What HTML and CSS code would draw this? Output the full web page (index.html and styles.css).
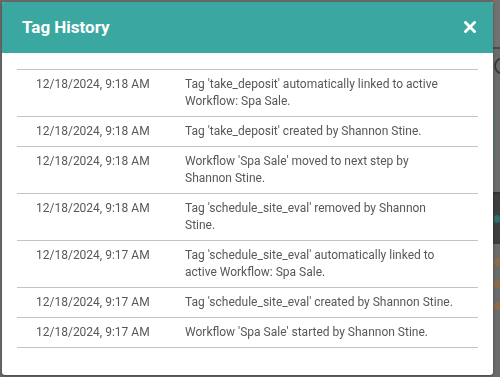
FILE: index.html
```html
<!DOCTYPE html>
<html>
<head>
<meta charset="utf-8">
<link rel="stylesheet" href="styles.css">
</head>
<body>
<div class="page">
  <div class="page-main"></div>
  <div class="page-side">
    <div class="side-top"></div>
    <div class="side-c"><span class="arc"></span></div>
    <div class="side-box"></div>
    <div class="side-gap"></div>
    <div class="side-dark"><span class="dot teal"></span></div>
    <div class="side-dots">
      <span class="dot orange"></span>
      <span class="dot orange"></span>
      <span class="dot orange"></span>
    </div>
  </div>
</div>

<div class="modal">
  <div class="modal-header">
    <h1 class="modal-title">Tag History</h1>
    <button class="close" aria-label="Close">
      <svg width="12" height="12" viewBox="0 0 12 12"><path d="M1.5 1.5 L10.5 10.5 M10.5 1.5 L1.5 10.5" stroke="#fff" stroke-width="2.8" stroke-linecap="square"/></svg>
    </button>
  </div>
  <div class="modal-body">
    <div class="history">
      <div class="row"><div class="date">12/18/2024, 9:18 AM</div><div class="desc">Tag 'take_deposit' automatically linked to active Workflow: Spa Sale.</div></div>
      <div class="row"><div class="date">12/18/2024, 9:18 AM</div><div class="desc">Tag 'take_deposit' created by Shannon Stine.</div></div>
      <div class="row"><div class="date">12/18/2024, 9:18 AM</div><div class="desc">Workflow 'Spa Sale' moved to next step by Shannon Stine.</div></div>
      <div class="row"><div class="date">12/18/2024, 9:18 AM</div><div class="desc">Tag 'schedule_site_eval' removed by Shannon Stine.</div></div>
      <div class="row"><div class="date">12/18/2024, 9:17 AM</div><div class="desc">Tag 'schedule_site_eval' automatically linked to active Workflow: Spa Sale.</div></div>
      <div class="row"><div class="date">12/18/2024, 9:17 AM</div><div class="desc">Tag 'schedule_site_eval' created by Shannon Stine.</div></div>
      <div class="row"><div class="date">12/18/2024, 9:17 AM</div><div class="desc">Workflow 'Spa Sale' started by Shannon Stine.</div></div>
    </div>
  </div>
</div>
</body>
</html>
```

FILE: styles.css
```css
html, body {
  margin: 0;
  padding: 0;
  width: 500px;
  height: 377px;
  overflow: hidden;
  background: #676767;
  font-family: Roboto, "Liberation Sans", Arial, sans-serif;
}

.page {
  display: flex;
  height: 377px;
}

.page-main {
  flex: 1;
  background: #696969;
}

.page-side {
  width: 7px;
  display: flex;
  flex-direction: column;
  background: #6b6b6b;
  overflow: hidden;
}

.side-top {
  height: 47px;
  background: #717171;
  border-bottom: 2px solid #4a4a4a;
}

.side-c {
  height: 42px;
  padding-top: 9px;
  padding-left: 1px;
}

.arc {
  display: block;
  width: 14px;
  height: 16px;
  box-sizing: border-box;
  border: 2px solid #3a3a3a;
  border-radius: 50%;
}

.side-box {
  margin-top: 10px;
  height: 44px;
  margin-left: 1px;
  border: 1px solid #4e7a76;
  border-right: none;
  border-radius: 3px 0 0 3px;
}

.side-gap {
  height: 36px;
}

.side-dark {
  height: 50px;
  background: #3e3e3e;
  border-top: 2px solid #333;
  display: flex;
  align-items: center;
  padding-left: 1px;
}

.side-dots {
  display: flex;
  flex-direction: column;
  gap: 14px;
  padding-top: 14px;
  padding-left: 1px;
}

.dot {
  display: block;
  width: 7px;
  height: 8px;
  border-radius: 4px;
}

.dot.teal { background: #2e6e6a; }
.dot.orange { background: #8a6a48; }

.modal {
  position: fixed;
  left: 2px;
  top: 2px;
  width: 491px;
  height: 373px;
  background: #fff;
  border-radius: 3px;
  overflow: hidden;
  box-shadow: 0 1px 3px rgba(0,0,0,0.35);
  display: flex;
  flex-direction: column;
}

.modal-header {
  height: 51px;
  flex: none;
  background: #3aa8a0;
  display: flex;
  align-items: center;
  justify-content: space-between;
  padding: 0 17px 0 20px;
}

.modal-title {
  margin: 0;
  font-size: 17px;
  font-weight: 700;
  color: #fff;
  line-height: 20px;
  padding-bottom: 1px;
}

.close {
  border: none;
  background: none;
  padding: 0;
  width: 12px;
  height: 12px;
  display: flex;
  margin-bottom: 2px;
}

.modal-body {
  padding: 16px 15px 0 15px;
}

.history {
  border-bottom: 1px solid #c4c4c4;
}

.row {
  display: grid;
  grid-template-columns: 168px 1fr;
  border-top: 1px solid #c4c4c4;
  font-size: 12px;
  line-height: 17px;
  color: #585858;
}

.date {
  padding: 6px 0 6px 19px;
}

.desc {
  padding: 6px 24px 6px 0;
}
```
